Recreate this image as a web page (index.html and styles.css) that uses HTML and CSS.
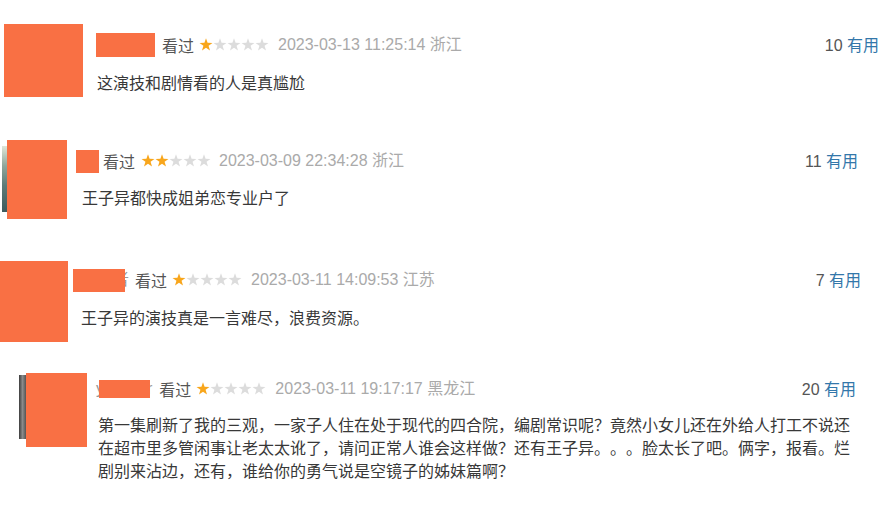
FILE: index.html
```html
<!DOCTYPE html>
<html lang="zh-CN">
<head>
<meta charset="utf-8">
<title>短评</title>
<link rel="stylesheet" href="styles.css">
</head>
<body>
<svg class="defs" width="0" height="0" aria-hidden="true">
  <defs>
    <symbol id="star" viewBox="0 0 14 14">
      <polygon points="7,0.2 8.59,4.82 13.47,4.9 9.57,7.83 11,12.5 7,9.7 3,12.5 4.43,7.83 0.53,4.9 5.41,4.82"/>
    </symbol>
  </defs>
</svg>
<div class="page">
  <div class="comment c1">
    <div class="avatar"></div>
    <div class="body">
      <div class="head">
        <span class="mask"></span>
        <span class="status">看过</span>
        <svg class="stars" viewBox="0 0 70 14"><use href="#star" x="0" width="14" height="14" class="on"/><use href="#star" x="14" width="14" height="14"/><use href="#star" x="28" width="14" height="14"/><use href="#star" x="42" width="14" height="14"/><use href="#star" x="56" width="14" height="14"/></svg>
        <span class="time">2023-03-13 11:25:14 浙江</span>
        <span class="votes"><span class="num">10</span> <a class="useful">有用</a></span>
      </div>
      <p class="text">这演技和剧情看的人是真尴尬</p>
    </div>
  </div>

  <div class="comment c2">
    <div class="strip"></div>
    <div class="avatar"></div>
    <div class="body">
      <div class="head">
        <span class="mask"></span>
        <span class="status">看过</span>
        <svg class="stars" viewBox="0 0 70 14"><use href="#star" x="0" width="14" height="14" class="on"/><use href="#star" x="14" width="14" height="14" class="on"/><use href="#star" x="28" width="14" height="14"/><use href="#star" x="42" width="14" height="14"/><use href="#star" x="56" width="14" height="14"/></svg>
        <span class="time">2023-03-09 22:34:28 浙江</span>
        <span class="votes"><span class="num">11</span> <a class="useful">有用</a></span>
      </div>
      <p class="text">王子异都快成姐弟恋专业户了</p>
    </div>
  </div>

  <div class="comment c3">
    <div class="avatar"></div>
    <div class="body">
      <div class="head">
        <span class="mask"></span><span class="frag">者</span>
        <span class="status">看过</span>
        <svg class="stars" viewBox="0 0 70 14"><use href="#star" x="0" width="14" height="14" class="on"/><use href="#star" x="14" width="14" height="14"/><use href="#star" x="28" width="14" height="14"/><use href="#star" x="42" width="14" height="14"/><use href="#star" x="56" width="14" height="14"/></svg>
        <span class="time">2023-03-11 14:09:53 江苏</span>
        <span class="votes"><span class="num">7</span> <a class="useful">有用</a></span>
      </div>
      <p class="text">王子异的演技真是一言难尽，浪费资源。</p>
    </div>
  </div>

  <div class="comment c4">
    <div class="strip"></div>
    <div class="avatar"></div>
    <div class="body">
      <div class="head">
        <span class="frag-l">y</span><span class="mask"></span><span class="frag-r">r</span>
        <span class="status">看过</span>
        <svg class="stars" viewBox="0 0 70 14"><use href="#star" x="0" width="14" height="14" class="on"/><use href="#star" x="14" width="14" height="14"/><use href="#star" x="28" width="14" height="14"/><use href="#star" x="42" width="14" height="14"/><use href="#star" x="56" width="14" height="14"/></svg>
        <span class="time">2023-03-11 19:17:17 黑龙江</span>
        <span class="votes"><span class="num">20</span> <a class="useful">有用</a></span>
      </div>
      <p class="text">第一集刷新了我的三观，一家子人住在处于现代的四合院，编剧常识呢？竟然小女儿还在外给人打工不说还<br>在超市里多管闲事让老太太讹了，请问正常人谁会这样做？还有王子异。。。脸太长了吧。俩字，报看。烂<br>剧别来沾边，还有，谁给你的勇气说是空镜子的姊妹篇啊？</p>
    </div>
  </div>
</div>
</body>
</html>
```

FILE: styles.css
```css
* { box-sizing: border-box; }
html, body {
  margin: 0;
  padding: 0;
  background: #fff;
}
body {
  width: 885px;
  height: 505px;
  overflow: hidden;
  font-family: "Liberation Sans", Arial, "Noto Sans CJK SC", sans-serif;
  color: #333;
}
.defs { position: absolute; }

.page { display: flex; flex-direction: column; }

.comment {
  display: flex;
  align-items: flex-start;
}

.avatar { background: #f97044; flex: none; }
.strip { flex: none; }

.body {
  flex: 1;
  min-width: 0;
  display: flex;
  flex-direction: column;
}

.head {
  display: flex;
  align-items: center;
  height: 24px;
  font-size: 16px;
  line-height: 24px;
  white-space: nowrap;
}

.mask {
  display: inline-block;
  background: #f97044;
  flex: none;
  position: relative;
  z-index: 1;
}

.status {
  color: #555;
  font-family: "Noto Sans CJK SC", sans-serif;
}

.stars {
  width: 70px;
  height: 14px;
  margin-left: 5px;
  margin-right: 9px;
  fill: #dcdcdc;
  flex: none;
}
.stars .on { fill: #f8a61c; }

.time { color: #aaa; }

.votes { margin-left: auto; color: #555; }
.useful {
  color: #3377aa;
  text-decoration: none;
  font-family: "Noto Sans CJK SC", sans-serif;
}

.text {
  margin: 0;
  font-family: "Noto Sans CJK SC", sans-serif;
  font-size: 16px;
  line-height: 22px;
  color: #383838;
  white-space: nowrap;
  text-spacing-trim: space-all;
}

.frag, .frag-l, .frag-r {
  display: inline-block;
  color: #999;
  flex: none;
}

/* block 1 */
.c1 { margin-top: 24px; padding-left: 4px; padding-right: 6px; }
.c1 .avatar { width: 79px; height: 73px; }
.c1 .body { margin-left: 14px; padding-top: 9px; }
.c1 .mask { width: 59px; height: 24px; margin-left: -1px; margin-right: 7px; }
.c1 .text { margin-top: 14px; }

/* block 2 */
.c2 { margin-top: 43px; padding-left: 2px; padding-right: 27px; }
.c2 .strip {
  width: 5px; height: 66px; margin-top: 6px;
  background: linear-gradient(#dfe6d8, #8fa69c 30%, #5d7b78 60%, #3e5a5c);
}
.c2 .avatar { width: 60px; height: 79px; }
.c2 .body { margin-left: 15px; padding-top: 9px; }
.c2 .mask { width: 23px; height: 23px; margin-left: -6px; margin-right: 4px; }
.c2 .stars { margin-left: 6px; margin-right: 8px; }
.c2 .text { margin-top: 13px; }

/* block 3 */
.c3 { margin-top: 42px; padding-left: 0; padding-right: 24px; }
.c3 .avatar { width: 68px; height: 81px; }
.c3 .body { margin-left: 13px; padding-top: 7px; }
.c3 .mask { width: 52px; height: 23px; margin-left: -8px; }
.c3 .frag { margin-left: -12px; margin-right: 6px; }
.c3 .text { margin-top: 14px; }

/* block 4 */
.c4 { margin-top: 31px; padding-left: 19px; padding-right: 29px; }
.c4 .strip {
  width: 7px; height: 64px; margin-top: 2px;
  background: linear-gradient(90deg, #3c3c3c, #8a8a8a 50%, #555);
}
.c4 .avatar { width: 61px; height: 74px; }
.c4 .body { margin-left: 11px; padding-top: 4px; }
.c4 .frag-l { margin-left: -2px; }
.c4 .mask { width: 51px; height: 18px; margin-left: -5px; margin-right: -3px; }
.c4 .frag-r { margin-right: 7px; }
.c4 .text { margin-top: 12px; line-height: 23px; }
```
